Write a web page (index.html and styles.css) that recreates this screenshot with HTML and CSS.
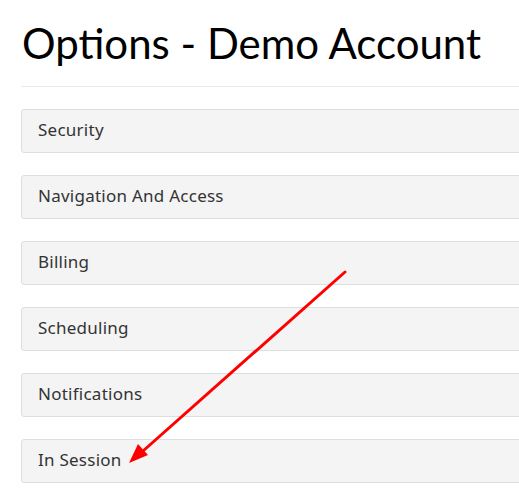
FILE: index.html
```
<!DOCTYPE html>
<html>
<head>
<meta charset="utf-8">
<link rel="stylesheet" href="styles.css">
</head>
<body>
<div class="page">
  <h1 class="title">Options - Demo Account</h1>
  <hr class="divider">
  <div class="panels">
    <div class="panel">Security</div>
    <div class="panel">Navigation And Access</div>
    <div class="panel">Billing</div>
    <div class="panel">Scheduling</div>
    <div class="panel">Notifications</div>
    <div class="panel">In Session</div>
  </div>
  <svg class="arrow" width="519" height="501" viewBox="0 0 519 501">
    <line x1="345" y1="272" x2="143" y2="451" stroke="#ff0000" stroke-width="3" stroke-linecap="round"/>
    <polygon points="129,463 138,444 148,455" fill="#ff0000"/>
  </svg>
</div>
</body>
</html>
```
FILE: styles.css
```
html, body {
  margin: 0;
  padding: 0;
  background: #fff;
  overflow: hidden;
}
.page {
  position: relative;
  width: 519px;
  height: 501px;
  overflow: hidden;
}
.title {
  margin: 0;
  padding: 20px 0 0 22px;
  font-family: Lato, "Noto Sans", sans-serif;
  font-weight: 400;
  font-size: 42px;
  line-height: 46px;
  color: #000;
}
.divider {
  margin: 20px -20px 0 21px;
  border: 0;
  border-top: 1px solid #eaeaea;
  height: 0;
}
.panels {
  display: flex;
  flex-direction: column;
  gap: 22px;
  margin: 22px -20px 0 21px;
}
.panel {
  box-sizing: border-box;
  height: 44px;
  background: #f4f4f4;
  border: 1px solid #dedede;
  border-radius: 3px;
  padding: 0 16px 3px;
  display: flex;
  align-items: center;
  font-family: "Noto Sans", sans-serif;
  font-size: 17px;
  letter-spacing: 0.25px;
  color: #333;
}
.arrow {
  position: absolute;
  left: 0;
  top: 0;
  pointer-events: none;
}
```
